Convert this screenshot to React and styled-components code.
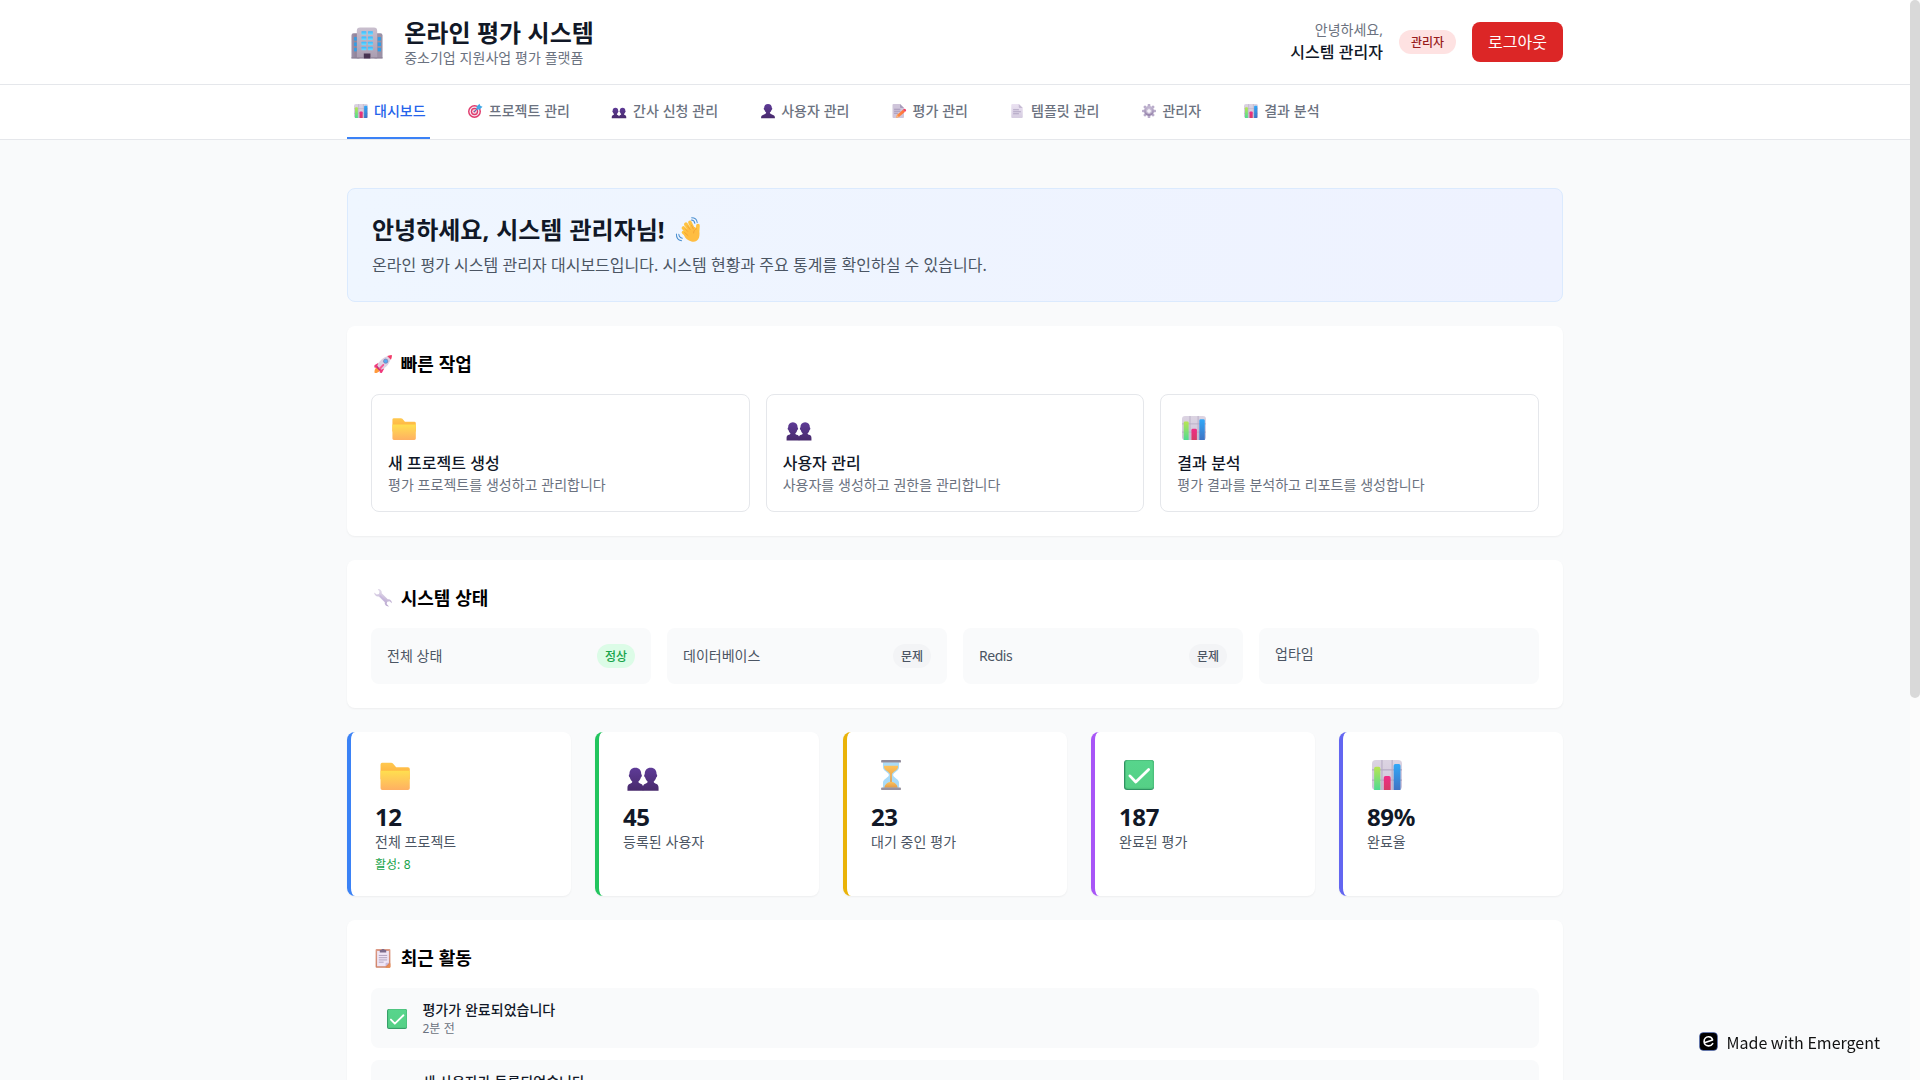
import React from "react";
import styled, { createGlobalStyle } from "styled-components";

const GlobalStyle = createGlobalStyle`
  *, *::before, *::after { box-sizing: border-box; }
  body {
    margin: 0;
    background: #f9fafb;
    color: #000;
    font-family: "Noto Sans", "Noto Sans CJK KR", sans-serif;
    font-size: 16px;
    line-height: 24px;
    word-spacing: 0.014em;
  }
  h1, h2, h3, p { margin: 0; font-size: inherit; font-weight: inherit; }
  button { font: inherit; word-spacing: inherit; margin: 0; border: 0; background: none; text-align: left; cursor: pointer; }
`;

/* ---------- emoji drawings ---------- */

const Glyph = styled.svg`
  display: inline-block;
  width: 1em;
  height: 1em;
  margin: 0 0.195em 0 0.18em;
  overflow: visible;
  vertical-align: -0.12em;
  flex: none;
`;

const HiddenDefs = styled.svg`
  position: absolute;
  width: 0;
  height: 0;
`;

const Grad = ({ id, from, to, horizontal }) => (
  <linearGradient id={id} x1="0" y1="0" x2={horizontal ? 1 : 0} y2={horizontal ? 0 : 1}>
    <stop offset="0" stopColor={from} />
    <stop offset="1" stopColor={to} />
  </linearGradient>
);

const Gradients = () => (
  <HiddenDefs aria-hidden="true">
    <defs>
      <Grad id="gGreen" from="#b8e552" to="#4fdb92" />
      <Grad id="gPink" from="#f02c86" to="#d53d66" />
      <Grad id="gBlue" from="#31a8f8" to="#3f73c4" />
      <Grad id="gBoard" from="#dcd4e2" to="#cfc5da" />
      <Grad id="gFolder" from="#ffdf4f" to="#ffb062" />
      <Grad id="gFolderBack" from="#ffc94f" to="#ffa73a" />
      <Grad id="gBust" from="#5e3b97" to="#482a6c" />
      <Grad id="gPaper" from="#ebe2f2" to="#d5cce0" />
      <Grad id="gSand" from="#ffc35a" to="#e09a4a" />
      <Grad id="gWall" from="#c9bfce" to="#a99db1" />
      <Grad id="gSide" from="#a094ab" to="#84778f" horizontal />
      <Grad id="gPane" from="#35b8ff" to="#6fdcff" />
      <Grad id="gCheck" from="#57d58c" to="#55d086" />
      <Grad id="gPencil" from="#ff9640" to="#ff6a3d" horizontal />
      <Grad id="gMetal" from="#e3dceb" to="#b9a7cf" />
      <Grad id="gGear" from="#c2b6d2" to="#9886ad" />
      <Grad id="gClip" from="#dc9a86" to="#cf8368" />
    </defs>
  </HiddenDefs>
);

const Chart = () => (
  <>
    <rect x="2" y="2" width="28" height="28" rx="3.5" fill="url(#gBoard)" />
    <path d="M11.3 2v28M20.8 2v28M2 11.2h28M2 20.8h28" stroke="#b6abc4" strokeWidth="1" />
    <path d="M4 30V10a1.6 1.6 0 0 1 1.6-1.6h2.6A1.6 1.6 0 0 1 9.8 10v20z" fill="url(#gGreen)" />
    <path d="M13 30V18.600A1.600 1.600 0 0 1 14.600 17h3.200a1.600 1.600 0 0 1 1.600 1.600V30z" fill="url(#gPink)" />
    <path d="M22.200 30V7.300a1.600 1.600 0 0 1 1.600-1.600H27a1.600 1.600 0 0 1 1.600 1.600V30z" fill="url(#gBlue)" />
  </>
);

const Target = () => (
  <>
    <circle cx="15" cy="17" r="13" fill="#e03a6c" />
    <circle cx="15" cy="17" r="10" fill="#f6e9f2" />
    <circle cx="15" cy="17" r="7.300" fill="#e03a6c" />
    <circle cx="15" cy="17" r="4.600" fill="#f6e9f2" />
    <circle cx="15" cy="17" r="2.200" fill="#e03a6c" />
    <path d="M14.500 17.500 23 9" stroke="#3b7fc4" strokeWidth="2" strokeLinecap="round" />
    <path d="m19 13 .3-6L25 1.500l1.600 4.200L31 7.500l-5.500 5.500z" fill="#3fa9e8" />
  </>
);

const Bust = ({ x = 0, w = 1 }) => (
  <g transform={`translate(${x} 0) scale(${w} 1)`} fill="url(#gBust)">
    <path d="M8 9.300c4 0 6 2.500 6 6 .9.300.9 2.700-.4 3-.5 1.700-1.300 2.900-2.500 3.800 0 1.300 1.200 1.700 2.900 2.200 1.300.5 2 1.800 2 3.500v2.900H0v-2.900c0-1.700.7-3 2-3.500 1.700-.5 2.900-.9 2.900-2.200-1.200-.9-2-2.100-2.500-3.800-1.300-.3-1.300-2.700-.4-3 0-3.500 2-6 6-6z" />
  </g>
);

const Busts = () => (
  <>
    <Bust x={1.500} w={0.920} />
    <Bust x={15.800} w={0.920} />
  </>
);

const Person = () => (
  <g fill="url(#gBust)">
    <path d="M16 2c5 0 7.600 3.200 7.600 7.600 1.400.4 1.200 3.800-.6 4.200-.6 2.400-1.700 4.200-3.300 5.400 0 2.600 2.200 3.300 5.300 4.200 3.300.9 4.800 2.600 4.800 5.600v1.500H2.200V29c0-3 1.500-4.700 4.800-5.600 3.100-.9 5.300-1.600 5.300-4.200-1.600-1.200-2.700-3-3.300-5.400-1.800-.4-2-3.800-.6-4.200C8.400 5.200 11 2 16 2z" />
  </g>
);

const PaperShape = () => (
  <>
    <path d="M4.500 4A2 2 0 0 1 6.500 2h13l8 8v18a2 2 0 0 1-2 2h-19a2 2 0 0 1-2-2z" fill="url(#gPaper)" />
    <path d="m19.500 2 8 8h-6a2 2 0 0 1-2-2z" fill="#c6bad3" />
  </>
);

const Page = () => (
  <>
    <PaperShape />
    <path d="M9 13.500h10M9 17.500h14M9 21.500h10" stroke="#a294b5" strokeWidth="1.500" strokeLinecap="round" />
  </>
);

const Memo = () => (
  <>
    <path d="M3 4a2 2 0 0 1 2-2h13l8 8v18a2 2 0 0 1-2 2H5a2 2 0 0 1-2-2z" fill="#cfc5da" />
    <path d="m18 2 8 8h-6a2 2 0 0 1-2-2z" fill="#a99cbb" />
    <path d="M7 12.500h11M7 16.500h11M7 20.500h6" stroke="#998aac" strokeWidth="1.500" strokeLinecap="round" />
    <path d="M10 29.800 11.700 24 24 13.500l4.200 4.200L16 28.200z" fill="url(#gPencil)" />
    <path d="m24 13.500 2-1.700c2-1.200 5.300 1.800 4 4l-1.800 1.900z" fill="#f23d62" />
    <path d="m10 29.800 1.700-5.800L16 28.200z" fill="#f3b58b" />
  </>
);

const Gear = () => (
  <>
    {[0, 45, 90, 135, 180, 225, 270, 315].map((deg) => (
      <rect key={deg} x="13.300" y="2" width="5.400" height="8" rx="1.500" fill="#b9acca" transform={`rotate(${deg} 16 16)`} />
    ))}
    <circle cx="16" cy="16" r="7.700" fill="none" stroke="url(#gGear)" strokeWidth="4.600" />
    <circle cx="16" cy="16" r="4.800" fill="#f6f2fa" stroke="#8e7ca5" strokeWidth="1" />
  </>
);

const Building = () => (
  <>
    <path d="M1.500 9a2 2 0 0 1 2-2H9v23.500H1.500z" fill="url(#gSide)" />
    <path d="M23 7h5.500a2 2 0 0 1 2 2v21.500H23z" fill="#9b90a5" />
    <path d="M6.500 4.500a3 3 0 0 1 3-3h13a3 3 0 0 1 3 3v26h-19z" fill="url(#gWall)" />
    {[5, 10, 14.800, 19.600].map((y) => (
      <g key={y} fill="url(#gPane)">
        <rect x="10.800" y={y} width="4.600" height="3.200" rx=".5" />
        <rect x="16.900" y={y} width="4.600" height="3.200" rx=".5" />
      </g>
    ))}
    {[10.500, 15.500, 20.500].map((y) => (
      <g key={y} fill="#2f9fe8">
        <rect x="4" y={y} width="2.400" height="3.300" />
        <rect x="26" y={y} width="3" height="3.300" />
      </g>
    ))}
    <path d="M13 25.800h6.200v4.700H13z" fill="#483452" />
    <path d="M1.500 29H13v1.500H1.500zM19.200 29h11.300v1.500H19.200z" fill="#8a7e92" opacity=".6" />
  </>
);

const Wave = () => (
  <>
    <g stroke="#ffc341" strokeWidth="4.300" strokeLinecap="round">
      <path d="M18 25 10.800 18.800" />
      <path d="M19 22 10.700 13.600" />
      <path d="M21 20 13.500 9.200" />
      <path d="M23.500 18 18.300 7.200" />
      <path d="M27 20 27.600 10.800" />
    </g>
    <path d="M14 17c3-5 8-6 12-3 3 2.500 4.300 7 2.800 11-1.500 3.800-5 5.300-8.800 4.300-4-1-7.500-4-8.500-7z" fill="#ffbd42" />
    <path d="m15.500 17.500-2.800-2.800M18.500 15.500l-3-4.200M22.200 14.800l-2.200-4.500M16 22.500l-4-3.500" stroke="#ef9d32" strokeWidth=".9" strokeLinecap="round" fill="none" />
    <path d="M26 14.500c-2.500 1-3.500 3-3.500 5" stroke="#ef9d32" strokeWidth=".9" strokeLinecap="round" fill="none" />
    <path d="M20.500 3.800c2.200.2 3.700 1.700 4 3.900M20.800 1.300c3.400 0 6 2.200 6.400 5.400M5.800 20.500c.2 2.400 1.800 4.200 4.100 4.600M3 20.200c-.2 4 2.200 7.200 6 7.800" transform="translate(-.5 .5)" stroke="#4a8fd0" strokeWidth="1.200" fill="none" strokeLinecap="round" />
  </>
);

const Rocket = () => (
  <>
    <path d="M3 30c-.8-3 .3-7.500 3.800-9.500l4.700 4.700C9.500 29 6 30.500 3 30z" fill="#ff9a3c" />
    <path d="m9 14-5.800 3.600c-1 1-.9 2.900 0 4.400L9 21.500zM18 23l-3.600 6.600c-1 .8-2.700.7-3.600-.6L11 22z" fill="#f0397c" />
    <path d="M7 19C9.800 10.700 17 4.200 26 3c1.500-.1 2.700.9 2.400 2.500C27 14.500 21.500 22 13 25z" fill="#dcd2e4" />
    <path d="M22.500 3.700c2-.8 4.300-1.500 6.200-1.700.8 0 1.300.5 1.300 1.300-.2 2-.8 4.100-1.600 6.100z" fill="#f23b69" />
    <path d="m7 19 6 6-2.500 1.500L5.500 21.500z" fill="#c62f77" />
    <path d="m9.500 22.500 6-6c1.500-1 3 .4 2 2l-5.500 6.500z" fill="#f65a97" />
    <circle cx="20.200" cy="11.600" r="3.400" fill="#55acf2" stroke="#7d73a8" strokeWidth="1" />
  </>
);

const Folder = () => (
  <>
    <path d="M2.500 6.200a1.700 1.700 0 0 1 1.700-1.700h8.200c.7 0 1.300.3 1.700.8l3 3.400h11a1.700 1.700 0 0 1 1.700 1.700V20H2.500z" fill="url(#gFolderBack)" />
    <path d="M2.500 12h27.300v16.300a1.700 1.700 0 0 1-1.700 1.700H4.200a1.700 1.700 0 0 1-1.700-1.700z" fill="url(#gFolder)" />
  </>
);

const Wrench = () => (
  <>
    <path d="M8 2.200c3.700-.3 6.700 2.800 6 6.600l9.400 9.200c3.700-.6 6.800 2.300 6.500 6.200l-3.700-3.300-3.600 1-.9 3.600 3.600 3.700c-4 .4-7.200-2.700-6.500-6.500l-9.300-9.200C5.700 14.200 2 11.100 2.300 7.300l3.900 3.400 3.500-1 .9-3.500z" fill="url(#gMetal)" />
    <path d="m11.500 12.500 8.500 8.200" stroke="#c3afe0" strokeWidth="1.500" strokeLinecap="round" />
  </>
);

const Hourglass = () => (
  <>
    <path d="M8.500 4h15v4.500c0 4-5.500 5-5.500 7.500s5.500 3.500 5.500 7.500V28h-15v-4.500c0-4 5.500-5 5.500-7.500s-5.500-3.500-5.500-7.500z" fill="#a9dbf8" />
    <path d="M9.500 7.300h13v1.400c0 2.900-5.300 4.300-5.700 6.800v8.500h-1.600v-8.500c-.4-2.500-5.700-3.900-5.700-6.800z" fill="url(#gSand)" />
    <path d="M9.800 28c0-3 3.700-5.700 6.200-5.700s6.200 2.700 6.200 5.700z" fill="url(#gSand)" />
    <rect x="6.800" y="2" width="18.500" height="2.400" rx=".8" fill="#8f8a99" />
    <rect x="6.800" y="27.600" width="18.500" height="2.400" rx=".8" fill="#98929f" />
  </>
);

const Check = () => (
  <>
    <rect x="2" y="2" width="28" height="28" rx="2.800" fill="#2f9362" />
    <rect x="3" y="2" width="27" height="27" rx="2.600" fill="#4cc07c" />
    <rect x="3.800" y="3" width="25" height="25" rx="1.500" fill="url(#gCheck)" />
    <path d="m7.500 16.800 5.500 5.700L25 10.800" fill="none" stroke="#fff" strokeWidth="2.600" strokeLinecap="round" strokeLinejoin="round" />
  </>
);

const Clipboard = () => (
  <>
    <path d="M4.500 3.500A1.500 1.500 0 0 1 6 2h20a1.500 1.500 0 0 1 1.500 1.500v26A1.500 1.500 0 0 1 26 31H6a1.500 1.500 0 0 1-1.500-1.500z" fill="url(#gClip)" />
    <path d="M6.800 5h18.400v18.500L20 29H6.800z" fill="#efe5f5" />
    <path d="M25.200 23.500 20 29v-4a1.500 1.500 0 0 1 1.500-1.500z" fill="#c9b9da" />
    <path d="M27.500 24v5.500A1.500 1.500 0 0 1 26 31h-6.500z" fill="#ea8d4f" />
    <path d="M11 3.500h2.500c0-2 5-2 5 0H21V7.500H11z" fill="#7c6b8c" />
    <path d="M9.500 12h13M9.500 15.500h13M9.500 19h13M9.500 22.500h7.500" stroke="#a596b5" strokeWidth="1.300" />
  </>
);

const drawings = {
  chart: Chart, target: Target, busts: Busts, person: Person, memo: Memo, page: Page,
  gear: Gear, building: Building, wave: Wave, rocket: Rocket, folder: Folder,
  wrench: Wrench, hourglass: Hourglass, check: Check, clipboard: Clipboard,
};

const Emoji = ({ name }) => {
  const Drawing = drawings[name];
  return (
    <Glyph viewBox="2 2 28 28" aria-hidden="true">
      <Drawing />
    </Glyph>
  );
};

/* ---------- page frame ---------- */

const Window = styled.div`
  display: flex;
  height: 100vh;
  overflow: hidden;
`;

const Viewport = styled.div`
  flex: 1;
  min-width: 0;
  height: 100%;
  overflow: hidden;
`;

const ScrollTrack = styled.div`
  width: 10px;
  flex: none;
  background: #fcfcfc;
`;

const ScrollThumb = styled.div`
  height: 698px;
  background: #d9d9d9;
  border-radius: 5px;
`;

const Container = styled.div`
  width: 1280px;
  margin: 0 auto;
  padding: 0 32px;
`;

const Header = styled.header`
  background: #fff;
  border-bottom: 1px solid #e5e7eb;
`;

const HeaderRow = styled(Container)`
  display: flex;
  align-items: center;
  justify-content: space-between;
  height: 84px;
`;

const Cluster = styled.div`
  display: flex;
  align-items: center;
  gap: 16px;
`;

const BigIcon = styled.div`
  display: flex;
  align-items: center;
  height: ${(p) => p.$line}px;
  padding-top: 2px;
  margin-bottom: ${(p) => p.$gap || 0}px;
  font-size: ${(p) => p.$size}px;
`;

const SiteTitle = styled.h1`
  padding-top: 2px;
  font-size: 24px;
  line-height: 30px;
  font-weight: 700;
  color: #111827;
`;

const Small = styled.p`
  font-size: 14px;
  line-height: 20px;
  letter-spacing: ${(p) => (p.$tight ? "-0.45px" : "normal")};
  color: ${(p) => p.$color || "#6b7280"};
`;

const Greeting = styled.div`
  text-align: right;
`;

const UserName = styled.p`
  font-weight: 500;
  color: #111827;
`;

const Pill = styled.span`
  padding: 5px ${(p) => p.$pad || 8}px 3px;
  border-radius: 999px;
  font-size: 12px;
  line-height: 16px;
  font-weight: 500;
  color: ${(p) => p.$color};
  background: ${(p) => p.$bg};
`;

const LogoutButton = styled.button`
  padding: 8px 16px;
  border-radius: 8px;
  background: #dc2626;
  color: #fff;
`;

const Nav = styled.nav`
  background: #fff;
  border-bottom: 1px solid #e5e7eb;
`;

const TabRow = styled(Container)`
  display: flex;
  gap: 32px;
`;

const Tab = styled.button`
  padding: 16px 4px;
  border-bottom: 2px solid ${(p) => (p.$active ? "#3b82f6" : "transparent")};
  font-size: 14px;
  line-height: 20px;
  font-weight: 500;
  white-space: nowrap;
  color: ${(p) => (p.$active ? "#2563eb" : "#6b7280")};
`;

const Main = styled(Container)`
  display: flex;
  flex-direction: column;
  gap: 24px;
  padding-top: 48px;
`;

const Welcome = styled.section`
  padding: 24px;
  border: 1px solid #dbeafe;
  border-radius: 8px;
  background: linear-gradient(to right, #eff6ff, #eef2ff);
`;

const WelcomeTitle = styled.h2`
  padding-top: 2px;
  margin-bottom: 8px;
  font-size: 24px;
  line-height: 30px;
  font-weight: 700;
  word-spacing: 0.03em;
  color: #111827;
`;

const WelcomeText = styled.p`
  word-spacing: 0.006em;
  color: #4b5563;
`;

const Panel = styled.section`
  padding: 24px;
  border-radius: 8px;
  background: #fff;
  box-shadow: 0 1px 2px rgba(0, 0, 0, 0.05);
`;

const PanelTitle = styled.h3`
  margin-bottom: 16px;
  font-size: 18px;
  line-height: 28px;
  font-weight: 600;
`;

const Grid = styled.div`
  display: grid;
  grid-template-columns: repeat(${(p) => p.$cols}, minmax(0, 1fr));
  gap: ${(p) => p.$gap}px;
`;

const ActionCard = styled.button`
  padding: 16px;
  border: 1px solid #e5e7eb;
  border-radius: 8px;
`;

const ActionTitle = styled.h3`
  font-weight: 500;
  color: #111827;
`;

const StatusCard = styled.div`
  display: flex;
  align-items: ${(p) => (p.$top ? "flex-start" : "center")};
  justify-content: space-between;
  height: 56px;
  padding: 16px;
  border-radius: 8px;
  background: #f9fafb;
`;

const StatCard = styled.div`
  height: 164px;
  padding: 24px;
  border-left: 4px solid ${(p) => p.$accent};
  border-radius: 8px;
  background: #fff;
  box-shadow: 0 1px 2px rgba(0, 0, 0, 0.05);
`;

const StatValue = styled.p`
  padding-top: 2px;
  font-size: 24px;
  line-height: 30px;
  font-weight: 700;
  letter-spacing: -0.4px;
  color: #111827;
`;

const StatNote = styled.p`
  margin-top: 5px;
  font-size: 12px;
  line-height: 16px;
  color: #16a34a;
`;

const ActivityList = styled.div`
  display: flex;
  flex-direction: column;
  gap: 12px;
`;

const ActivityItem = styled.div`
  display: flex;
  align-items: center;
  gap: 12px;
  padding: 12px;
  border-radius: 8px;
  background: #f9fafb;
`;

const ActivityTitle = styled.p`
  font-size: 14px;
  line-height: 20px;
  font-weight: 500;
  color: #111827;
`;

const ActivityTime = styled.p`
  padding-top: 2px;
  font-size: 12px;
  line-height: 14px;
  color: #6b7280;
`;

const MadeWith = styled.div`
  position: fixed;
  right: 40px;
  bottom: 26px;
  display: flex;
  align-items: center;
  gap: 8px;
  font-family: "Noto Sans CJK KR", sans-serif;
  font-size: 16px;
  line-height: 24px;
  word-spacing: normal;
  color: #111;
`;

const MadeLogo = styled.svg`
  width: 19px;
  height: 19px;
  flex: none;
  margin-top: -1px;
`;

/* ---------- data ---------- */

const tabs = [
  ["chart", "대시보드"],
  ["target", "프로젝트 관리"],
  ["busts", "간사 신청 관리"],
  ["person", "사용자 관리"],
  ["memo", "평가 관리"],
  ["page", "템플릿 관리"],
  ["gear", "관리자"],
  ["chart", "결과 분석"],
];

const actions = [
  ["folder", "새 프로젝트 생성", "평가 프로젝트를 생성하고 관리합니다"],
  ["busts", "사용자 관리", "사용자를 생성하고 권한을 관리합니다"],
  ["chart", "결과 분석", "평가 결과를 분석하고 리포트를 생성합니다"],
];

const statuses = [
  { label: "전체 상태", state: "정상", ok: true },
  { label: "데이터베이스", state: "문제" },
  { label: "Redis", state: "문제", latin: true },
  { label: "업타임" },
];

const stats = [
  { icon: "folder", value: "12", label: "전체 프로젝트", note: "활성: 8", accent: "#3b82f6" },
  { icon: "busts", value: "45", label: "등록된 사용자", accent: "#22c55e" },
  { icon: "hourglass", value: "23", label: "대기 중인 평가", accent: "#eab308" },
  { icon: "check", value: "187", label: "완료된 평가", accent: "#a855f7" },
  { icon: "chart", value: "89%", label: "완료율", accent: "#6366f1" },
];

const activities = [
  ["check", "평가가 완료되었습니다", "2분 전"],
  ["person", "새 사용자가 등록되었습니다", "15분 전"],
];

export default function App() {
  return (
    <>
      <GlobalStyle />
      <Gradients />
      <Window>
        <Viewport>
          <Header>
            <HeaderRow>
              <Cluster>
                <BigIcon $line={36} $size={30}><Emoji name="building" /></BigIcon>
                <div>
                  <SiteTitle>온라인 평가 시스템</SiteTitle>
                  <Small>중소기업 지원사업 평가 플랫폼</Small>
                </div>
              </Cluster>
              <Cluster>
                <Greeting>
                  <Small>안녕하세요,</Small>
                  <UserName>시스템 관리자</UserName>
                </Greeting>
                <Pill $pad={12} $color="#991b1b" $bg="#fee2e2">관리자</Pill>
                <LogoutButton>로그아웃</LogoutButton>
              </Cluster>
            </HeaderRow>
          </Header>

          <Nav>
            <TabRow>
              {tabs.map(([icon, label], i) => (
                <Tab key={label} $active={i === 0}>
                  <Emoji name={icon} /> {label}
                </Tab>
              ))}
            </TabRow>
          </Nav>

          <Main as="main">
            <Welcome>
              <WelcomeTitle>안녕하세요, 시스템 관리자님! <Emoji name="wave" /></WelcomeTitle>
              <WelcomeText>온라인 평가 시스템 관리자 대시보드입니다. 시스템 현황과 주요 통계를 확인하실 수 있습니다.</WelcomeText>
            </Welcome>

            <Panel>
              <PanelTitle><Emoji name="rocket" /> 빠른 작업</PanelTitle>
              <Grid $cols={3} $gap={16}>
                {actions.map(([icon, title, text]) => (
                  <ActionCard key={title}>
                    <BigIcon $line={32} $size={24} $gap={8}><Emoji name={icon} /></BigIcon>
                    <ActionTitle>{title}</ActionTitle>
                    <Small>{text}</Small>
                  </ActionCard>
                ))}
              </Grid>
            </Panel>

            <Panel>
              <PanelTitle><Emoji name="wrench" /> 시스템 상태</PanelTitle>
              <Grid $cols={4} $gap={16}>
                {statuses.map((s) => (
                  <StatusCard key={s.label} $top={!s.state}>
                    <Small $color="#4b5563" $tight={s.latin}>{s.label}</Small>
                    {s.state && (
                      <Pill $color={s.ok ? "#16a34a" : "#4b5563"} $bg={s.ok ? "#dcfce7" : "#f3f4f6"}>{s.state}</Pill>
                    )}
                  </StatusCard>
                ))}
              </Grid>
            </Panel>

            <Grid $cols={5} $gap={24}>
              {stats.map((s) => (
                <StatCard key={s.label} $accent={s.accent}>
                  <BigIcon $line={36} $size={30} $gap={8}><Emoji name={s.icon} /></BigIcon>
                  <StatValue>{s.value}</StatValue>
                  <Small $color="#4b5563">{s.label}</Small>
                  {s.note && <StatNote>{s.note}</StatNote>}
                </StatCard>
              ))}
            </Grid>

            <Panel>
              <PanelTitle><Emoji name="clipboard" /> 최근 활동</PanelTitle>
              <ActivityList>
                {activities.map(([icon, title, time]) => (
                  <ActivityItem key={title}>
                    <BigIcon $line={28} $size={20}><Emoji name={icon} /></BigIcon>
                    <div>
                      <ActivityTitle>{title}</ActivityTitle>
                      <ActivityTime>{time}</ActivityTime>
                    </div>
                  </ActivityItem>
                ))}
              </ActivityList>
            </Panel>
          </Main>
        </Viewport>
        <ScrollTrack><ScrollThumb /></ScrollTrack>
      </Window>

      <MadeWith>
        <MadeLogo viewBox="0 0 19 19" aria-hidden="true">
          <rect x=".5" y=".5" width="18" height="18" rx="4" fill="#000" stroke="#4a6fd8" strokeWidth=".5" />
          <path d="M5.300 10.800 13.600 8c-.5-2.300-2.300-3.300-4.200-3.200-2.500.2-4.400 2.200-4.300 4.800.1 2.500 2 4.400 4.600 4.300 1.800-.1 3.200-1 4-2.300" fill="none" stroke="#fff" strokeWidth="1.600" strokeLinecap="round" strokeLinejoin="round" />
        </MadeLogo>
        <span>Made with Emergent</span>
      </MadeWith>
    </>
  );
}
